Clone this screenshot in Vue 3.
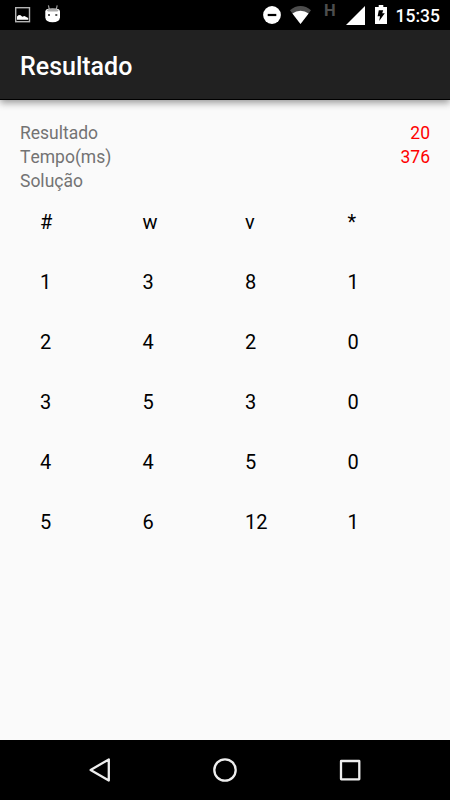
<script setup>
const summary = [
  { label: 'Resultado', value: '20' },
  { label: 'Tempo(ms)', value: '376' },
  { label: 'Solução', value: '' }
]
const rows = [
  ['#', 'w', 'v', '*'],
  ['1', '3', '8', '1'],
  ['2', '4', '2', '0'],
  ['3', '5', '3', '0'],
  ['4', '4', '5', '0'],
  ['5', '6', '12', '1']
]
</script>

<template>
  <div class="screen">
    <header class="status">
      <div class="notifications">
        <svg class="picture" width="16" height="16" viewBox="0 0 16 16">
          <rect x=".7" y=".7" width="13.8" height="14" fill="none" stroke="#b5b5b5" stroke-width="1.4" />
          <path d="M2 12.8V9.4L3.8 7.9 5.6 8.2 7.3 9.8 9.4 9 13.2 11V12.8Z" fill="#fff" />
        </svg>
        <svg class="droid" width="16" height="18" viewBox="0 0 16 18">
          <path d="M3.4 .3 4.5 5M12.2 .3 11.1 5" stroke="#999" stroke-width="1.2" />
          <path d="M.3 6.5Q.5 4 4 3.7H11.5Q14.8 4 15 6.5V12.5Q14.5 17.2 7.6 17.2T.3 12.5Z" fill="#fff" />
          <path d="M1.6 5.2Q3.6 3.3 7.6 3.3T13.6 5.2L12.5 6.6H3Z" fill="#aaa" />
          <path d="M3 9h2v2H3zM10.3 9h2v2h-2z" fill="#555" />
        </svg>
      </div>
      <div class="system">
        <svg class="dnd" width="18" height="18" viewBox="0 0 18 18">
          <circle cx="9" cy="9" r="8.9" fill="#fff" />
          <rect x="4.7" y="7.9" width="8.6" height="2.2" fill="#000" />
        </svg>
        <svg class="wifi" width="22" height="18" viewBox="0 0 22 18">
          <path d="M0 4.3Q4.7 0 10.5 0T21 4.3L10.5 18Z" fill="#4d4d4d" />
          <path d="M2.4 7.6Q6 4.8 10.5 4.8T18.6 7.6L10.5 18Z" fill="#fff" />
        </svg>
        <span class="network">H</span>
        <svg class="signal" width="19" height="19" viewBox="0 0 19 19">
          <path d="M0 19 19 0V19Z" fill="#fff" />
        </svg>
        <svg class="battery" width="12" height="19" viewBox="0 0 12 19">
          <path d="M3.7 0H8.3V2H12V19H0V2H3.7Z" fill="#fff" />
          <path d="M3.8 5.2H8.2L7.2 8.3H9.8L4.2 16 5 11.3H2.6Z" fill="#000" />
        </svg>
        <span class="clock">15:35</span>
      </div>
    </header>
    <div class="toolbar"><h1>Resultado</h1></div>
    <main>
      <div v-for="item in summary" :key="item.label" class="line">
        <span>{{ item.label }}</span>
        <span class="value">{{ item.value }}</span>
      </div>
      <div class="table">
        <div v-for="(row, i) in rows" :key="i" class="row">
          <span v-for="(cell, j) in row" :key="j">{{ cell }}</span>
        </div>
      </div>
    </main>
    <nav>
      <svg width="26" height="26" viewBox="0 0 26 26">
        <path d="M21.8 2.4V23.6L3.6 13Z" />
      </svg>
      <svg width="26" height="26" viewBox="0 0 26 26">
        <circle cx="13" cy="13" r="10.7" />
      </svg>
      <svg width="26" height="26" viewBox="0 0 26 26">
        <rect x="4" y="4" width="18.3" height="18.3" rx=".3" />
      </svg>
    </nav>
  </div>
</template>

<style>
body {
  margin: 0;
}
</style>

<style scoped>
.screen {
  width: 450px;
  height: 800px;
  display: flex;
  flex-direction: column;
  overflow: hidden;
  background: #fafafa;
  font-family: Roboto, sans-serif;
}
.status {
  height: 30px;
  flex: none;
  display: flex;
  justify-content: space-between;
  background: #000;
}
.notifications,
.system {
  display: flex;
  align-items: flex-start;
}
.picture {
  margin: 7px 0 0 15px;
}
.droid {
  margin: 5px 0 0 14px;
}
.system {
  padding-right: 10px;
}
.dnd {
  margin-top: 6px;
}
.wifi {
  margin: 6px 0 0 9px;
}
.network {
  width: 12px;
  margin: 2px 0 0 12px;
  color: #4d4d4d;
  font-size: 16.5px;
  font-weight: 700;
  line-height: 18px;
}
.signal {
  margin: 6px 0 0 10px;
}
.battery {
  margin: 5px 0 0 10px;
}
.clock {
  width: 45px;
  margin-left: 8px;
  text-align: right;
  color: #fff;
  font-size: 17.5px;
  font-weight: 500;
  line-height: 32px;
}
.toolbar {
  height: 70px;
  flex: none;
  box-sizing: border-box;
  display: flex;
  align-items: center;
  padding: 4px 20px 0;
  background: #212121;
  border-bottom: 1px solid #000;
  box-shadow: 0 3px 7px rgba(0, 0, 0, 0.38);
}
h1 {
  margin: 0;
  color: #fff;
  font-size: 25px;
  font-weight: 500;
}
main {
  flex: 1;
  padding: 21px 20px 0;
}
.line {
  height: 24px;
  display: flex;
  justify-content: space-between;
  color: #737373;
  font-size: 17.5px;
  font-kerning: none;
  line-height: 24px;
}
.value {
  color: #f00;
}
.row {
  height: 60px;
  display: grid;
  grid-template-columns: repeat(4, 1fr);
  color: #000;
  font-size: 20px;
  line-height: 58px;
}
.row span {
  padding-left: 20px;
}
nav {
  height: 60px;
  flex: none;
  display: flex;
  justify-content: center;
  align-items: center;
  gap: 99px;
  background: #000;
}
nav svg {
  fill: none;
  stroke: #eee;
  stroke-width: 2.3;
  stroke-linejoin: round;
}
</style>
